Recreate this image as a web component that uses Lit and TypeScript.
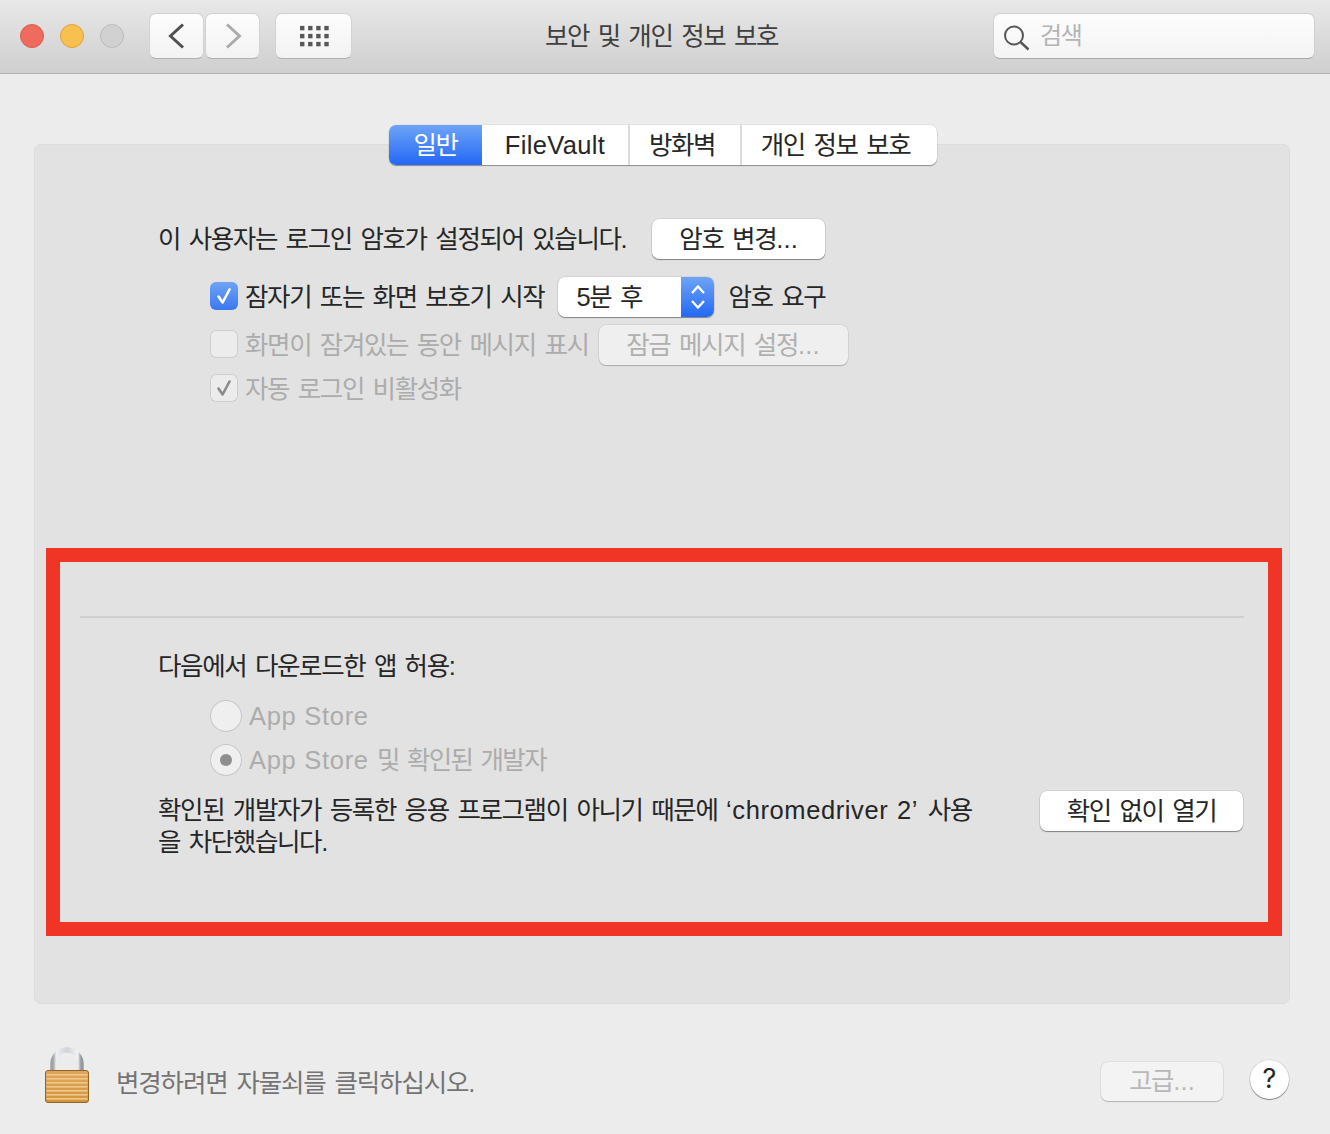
import { LitElement, html, css, svg } from "lit";
import { customElement } from "lit/decorators.js";

const check = (color: string) => svg`<svg class="chk" viewBox="0 0 28 28" width="28" height="28"><path d="M8.5 14.5 L12.6 20.5 L19.5 7.5" fill="none" stroke="${color}" stroke-width="2.6" stroke-linecap="round" stroke-linejoin="round"/></svg>`;

@customElement("app-root")
export class AppRoot extends LitElement {
  static styles = css`
    :host {
      display: block;
      width: 1330px;
      height: 1134px;
      position: relative;
      overflow: hidden;
      background: #ececec;
      color: #262626;
      font-family: "Liberation Sans", "Noto Sans CJK KR", sans-serif;
      font-size: 25.5px;
      line-height: 32px;
      letter-spacing: -1.38px;
      word-spacing: 2.9px;
    }
    * { box-sizing: border-box; }
    .l { letter-spacing: 0.2px; word-spacing: 0; }
    .titlebar {
      height: 74px;
      padding: 13px 15px 0 20px;
      display: flex;
      align-items: flex-start;
      position: relative;
      background: linear-gradient(#e8e8e8, #cfcfcf);
      border-bottom: 1px solid #b1b1b1;
    }
    .light {
      width: 24px; height: 24px; border-radius: 50%;
      margin: 11px 16px 0 0; flex: none;
    }
    .red { background: #ef6a5f; border: 1px solid #dc5a50; }
    .yellow { background: #f8c04f; border: 1px solid #dfa33a; }
    .grey { background: #d1d1d1; border: 1px solid #bcbcbc; }
    .tb-btn {
      height: 45.5px; border-radius: 7px; flex: none;
      background: linear-gradient(#fdfdfd, #f2f2f2);
      border: 1px solid #d2d2d2; border-bottom-color: #b0b0b0;
      display: flex; align-items: center; justify-content: center;
    }
    .back { width: 55px; margin-left: 9px; }
    .fwd { width: 55px; margin-left: 1px; }
    .grid { width: 77px; margin-left: 15px; }
    .title {
      position: absolute; left: 0; right: 7px; top: 20px;
      text-align: center; line-height: 32px; color: #3f3f3f;
    }
    .search {
      margin-left: auto; width: 322px; height: 45.5px; flex: none;
      border-radius: 7px;
      background: linear-gradient(#fdfdfd, #f4f4f4);
      border: 1px solid #d0d0d0; border-bottom-color: #a9a9a9;
      display: flex; align-items: center; padding-left: 10px; gap: 10px;
      color: #b4b4b4; font-size: 24px;
    }
    .search span { padding-bottom: 0; }

    .panel {
      position: absolute; left: 34px; top: 144px; width: 1256px; height: 860px;
      background: #e2e2e2;
      border: 1px solid #dcdcdc;
      border-radius: 7px;
      padding: 74px 46px 0 123px;
      display: flex; flex-direction: column;
    }
    .tabs {
      position: absolute; left: 389px; top: 125px; height: 40px; width: 548px;
      display: flex; border-radius: 7px; background: #fff;
      box-shadow: 0 1px 1px rgba(0,0,0,.35), 0 0 0 .5px rgba(0,0,0,.08);
      overflow: hidden; z-index: 2;
    }
    .tab {
      display: flex; align-items: center; justify-content: center;
      border-left: 2px solid #dcdcdc;
    }
    .tab.on {
      width: 93px; border-left: 0; color: #fff;
      background: linear-gradient(#6da4f7, #2368f5);
    }
    .tab.fv { width: 146px; border-left: 0; letter-spacing: 0.4px; }
    .tab.fv .l { letter-spacing: 0.35px; }
    .tab.fw { width: 112px; padding-right: 6px; }
    .tab.pr { flex: 1; padding-right: 8px; }
    .row { display: flex; align-items: center; }
    .btn {
      display: flex; align-items: center; justify-content: center;
      height: 40px; border-radius: 7px; background: #fff; flex: none;
      box-shadow: 0 1px 1px rgba(0,0,0,.38), 0 0 0 .5px rgba(0,0,0,.14);
    }
    .btn.off { background: #efefef; color: #b0b0b0; box-shadow: 0 1px 1px rgba(0,0,0,.2), 0 0 0 .5px rgba(0,0,0,.1); }
    .pw { width: 173px; margin-left: 26px; }
    .lockmsg { width: 249px; margin-left: 10px; }
    .open { width: 203px; }
    .adv { width: 122px; height: 39px; margin-left: auto; margin-top: 10px; }
    .btn.adv { background: #f3f3f3; color: #b8b8b8; }
    .cb {
      width: 28px; height: 28px; border-radius: 6px; flex: none;
      margin-right: 7px; margin-bottom: 2px;
    }
    .cb.on { background: linear-gradient(#6ea3f6, #3a78f2); }
    .cb.off { background: #ececec; box-shadow: inset 0 0 0 1px #cdcdcd; }
    .chk { display: block; }
    .dim { color: #acacac; }
    .sub { margin-left: 52px; }
    .select {
      width: 156px; height: 40px; border-radius: 7px; background: #fff; flex: none;
      margin: 0 14px 0 14px; padding-left: 18px;
      display: flex; align-items: center; justify-content: space-between; overflow: hidden;
      box-shadow: 0 1px 1px rgba(0,0,0,.38), 0 0 0 .5px rgba(0,0,0,.12);
    }
    .stepper {
      width: 33px; height: 40px; display: flex; align-items: center; justify-content: center;
      background: linear-gradient(#6fa4f5, #2368f5);
    }
    .m18 { margin-top: 18px; }
    .m8 { margin-top: 8px; }
    .divider { height: 2px; background: #cfcfcf; margin: 211px -1px 0 -78px; flex: none; }
    .m32 { margin-top: 32px; }
    .r1 { margin-top: 18px; }
    .r2 { margin-top: 12px; letter-spacing: -1.7px; }
    .radio {
      width: 32px; height: 32px; border-radius: 50%; background: #efefef;
      box-shadow: inset 0 0 0 1px #c6c6c6; margin-right: 7px; flex: none;
      display: flex; align-items: center; justify-content: center;
    }
    .radio i { width: 12px; height: 12px; border-radius: 50%; background: #8f8f8f; display: block; }
    .app { letter-spacing: 0.7px; word-spacing: 0; }
    .warn { align-items: flex-start; justify-content: space-between; margin-top: 15px; }
    .warn p { margin: 3px 0 0; width: 830px; line-height: 32px; }
    .warn .cd { letter-spacing: 0.6px; word-spacing: 1px; margin: 0 1px 0 0; }
    .annot {
      position: absolute; left: 46px; top: 548px; width: 1236px; height: 388px;
      border: 14px solid #f03425; z-index: 3; pointer-events: none;
    }
    .footer {
      position: absolute; left: 44px; right: 41px; top: 1046px; height: 60px;
      display: flex; align-items: center;
    }
    .footer .msg { color: #747474; margin-left: 26px; margin-top: 14px; letter-spacing: -1.15px; }
    .help {
      width: 39px; height: 39px; border-radius: 50%; background: #fff; flex: none;
      box-shadow: 0 1px 1px rgba(0,0,0,.4), 0 0 0 .5px rgba(0,0,0,.14);
      display: flex; align-items: center; justify-content: center; margin-left: 27px;
      font-family: Inter, sans-serif; font-weight: 400;
      font-size: 27px; letter-spacing: 0; margin-top: 6px;
    }
  `;

  render() {
    return html`
      <div class="titlebar">
        <div class="light red"></div>
        <div class="light yellow"></div>
        <div class="light grey"></div>
        <div class="tb-btn back">
          <svg width="20" height="28" viewBox="0 0 20 28"><path d="M16 2.5 L3.5 14 L16 25.5" fill="none" stroke="#4f4f4f" stroke-width="3"/></svg>
        </div>
        <div class="tb-btn fwd">
          <svg width="20" height="28" viewBox="0 0 20 28"><path d="M4 2.5 L16.5 14 L4 25.5" fill="none" stroke="#ababab" stroke-width="3"/></svg>
        </div>
        <div class="tb-btn grid">
          <svg width="30" height="22" viewBox="0 0 30 22" fill="#575757">
            ${[0, 1, 2].map((r) => [0, 1, 2, 3].map((c) => svg`<rect x="${1 + c * 8.1}" y="${0.9 + r * 8}" width="4.4" height="4.4"/>`))}
          </svg>
        </div>
        <div class="title">보안 및 개인 정보 보호</div>
        <div class="search">
          <svg width="26" height="30" viewBox="0 0 26 30"><circle cx="10" cy="14.5" r="9" fill="none" stroke="#555" stroke-width="2"/><path d="M16.5 21 L24.5 28.5" stroke="#555" stroke-width="2.4"/></svg>
          <span>검색</span>
        </div>
      </div>

      <div class="tabs">
        <div class="tab on">일반</div>
        <div class="tab fv"><span class="l">FileVault</span></div>
        <div class="tab fw">방화벽</div>
        <div class="tab pr">개인 정보 보호</div>
      </div>

      <div class="panel">
        <div class="row">
          <span>이 사용자는 로그인 암호가 설정되어 있습니다.</span>
          <div class="btn pw">암호 변경<span class="l">...</span></div>
        </div>
        <div class="row sub m18">
          <div class="cb on">${check("#fff")}</div>
          <span>잠자기 또는 화면 보호기 시작</span>
          <div class="select">
            <span>5분 후</span>
            <div class="stepper">
              <svg width="18" height="30" viewBox="0 0 18 30"><path d="M3 11 L9 4.5 L15 11 M3 19 L9 25.5 L15 19" fill="none" stroke="#fff" stroke-width="2.4"/></svg>
            </div>
          </div>
          <span>암호 요구</span>
        </div>
        <div class="row sub dim m8">
          <div class="cb off"></div>
          <span>화면이 잠겨있는 동안 메시지 표시</span>
          <div class="btn off lockmsg">잠금 메시지 설정<span class="l">...</span></div>
        </div>
        <div class="row sub dim m8">
          <div class="cb off">${check("#8b8b8b")}</div>
          <span>자동 로그인 비활성화</span>
        </div>

        <div class="divider"></div>
        <div class="row m32">다음에서 다운로드한 앱 허용:</div>
        <div class="row sub dim r1">
          <div class="radio"></div><span class="app">App Store</span>
        </div>
        <div class="row sub dim r2">
          <div class="radio"><i></i></div><span><span class="app">App Store</span> 및 확인된 개발자</span>
        </div>
        <div class="row warn">
          <p>확인된 개발자가 등록한 응용 프로그램이 아니기 때문에 <span class="cd">‘chromedriver 2’</span> 사용<br />을 차단했습니다.</p>
          <div class="btn open">확인 없이 열기</div>
        </div>
      </div>

      <div class="annot"></div>

      <div class="footer">
        <svg width="46" height="58" viewBox="0 0 46 58">
          <defs>
            <linearGradient id="sh" x1="0" x2="1" y1="0" y2="0">
              <stop offset="0" stop-color="#9ea3a8"/><stop offset=".12" stop-color="#eef0f2"/><stop offset=".5" stop-color="#cfd2d6"/><stop offset=".88" stop-color="#f2f3f5"/><stop offset="1" stop-color="#94999f"/>
            </linearGradient>
            <linearGradient id="body" x1="0" x2="0" y1="0" y2="1">
              <stop offset="0" stop-color="#dfa75c"/><stop offset="1" stop-color="#d3933c"/>
            </linearGradient>
          </defs>
          <path d="M9 24 V17 A14 14 0 0 1 37 17 V24" fill="none" stroke="url(#sh)" stroke-width="5.5"/>
          <rect x="1.5" y="23.5" width="43" height="32" rx="2.5" fill="url(#body)" stroke="#92642a"/>
          ${[0, 1, 2, 3, 4, 5, 6].map((i) => svg`<rect x="2.5" y="${27 + i * 4}" width="41" height="1.6" fill="#efc98a"/>`)}
        </svg>
        <span class="msg">변경하려면 자물쇠를 클릭하십시오.</span>
        <div class="btn off adv">고급<span class="l">...</span></div>
        <div class="help">?</div>
      </div>
    `;
  }
}
